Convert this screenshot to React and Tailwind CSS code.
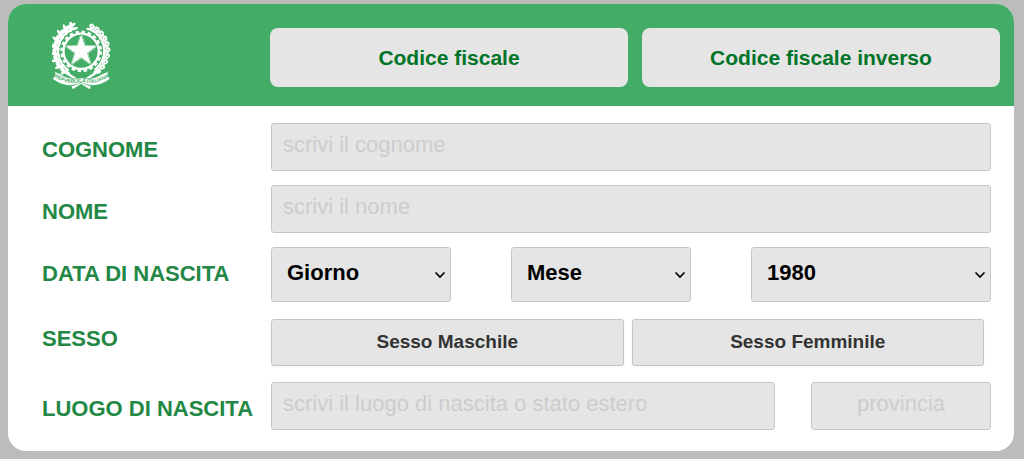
import { useState } from "react";

const MONTHS = [
  "Gennaio",
  "Febbraio",
  "Marzo",
  "Aprile",
  "Maggio",
  "Giugno",
  "Luglio",
  "Agosto",
  "Settembre",
  "Ottobre",
  "Novembre",
  "Dicembre",
];
const DAYS = Array.from({ length: 31 }, (_, i) => String(i + 1));
const YEARS = Array.from({ length: 100 }, (_, i) => String(2020 - i));

const labelClass = "w-[229px] shrink-0 whitespace-nowrap text-[22px] leading-[54px] font-bold text-[#238845]";
const inputClass =
  "h-12 rounded-[3px] border border-[#c6c6c6] bg-[#e5e5e5] px-[11px] pb-1 text-[22px] text-gray-800 outline-none placeholder:text-[#cdcdcd] focus:border-[#43ac66]";

// points of a five-pointed star, starting from the top
function star(cx, cy, outer, inner) {
  return Array.from({ length: 10 }, (_, i) => {
    const r = i % 2 ? inner : outer;
    const a = (i * Math.PI) / 5;
    return `${(cx + r * Math.sin(a)).toFixed(1)},${(cy - r * Math.cos(a)).toFixed(1)}`;
  }).join(" ");
}

function polar(angle, radius) {
  const a = (angle * Math.PI) / 180;
  return [121 + radius * Math.sin(a), 114 - radius * Math.cos(a)];
}

const OLIVE = [-142, -127, -112, -97, -82, -67, -52, -37, -23];
const OAK = [141, 128, 115, 102, 89, 76, 63, 50, 37, 24];

function Emblem() {
  return (
    <svg viewBox="34 28 176 201" className="h-[67px] w-[59px]" role="img" aria-label="Repubblica Italiana">
      {/* Olive branch */}
      <g fill="#fff">
        {OLIVE.map((angle) => {
          const [x1, y1] = polar(angle, 79);
          const [x2, y2] = polar(angle + 6, 69);
          return (
            <g key={angle}>
              <ellipse cx={x1} cy={y1} rx="5" ry="17" transform={`rotate(${angle + 18} ${x1} ${y1})`} />
              <ellipse cx={x2} cy={y2} rx="4" ry="11" transform={`rotate(${angle + 100} ${x2} ${y2})`} />
              <ellipse cx={x1} cy={y1} rx="5" ry="17" transform={`rotate(${angle + 76} ${x1} ${y1})`} />
            </g>
          );
        })}
      </g>
      {/* Oak branch */}
      <g fill="#fff">
        {OAK.map((angle) => {
          const [x1, y1] = polar(angle, 80);
          const [x2, y2] = polar(angle - 3, 69);
          const [x3, y3] = polar(angle + 6, 77);
          return (
            <g key={angle}>
              <ellipse cx={x1} cy={y1} rx="7" ry="9" transform={`rotate(${angle - 60} ${x1} ${y1})`} />
              <ellipse cx={x2} cy={y2} rx="4" ry="10" transform={`rotate(${angle - 104} ${x2} ${y2})`} />
              <circle cx={x3} cy={y3} r="5" />
              <circle cx={x1} cy={y1} r="2" fill="#43ac66" />
              <circle cx={x3} cy={y3} r="1.4" fill="#43ac66" />
            </g>
          );
        })}
      </g>
      {/* Gear */}
      <circle cx="121" cy="116" r="65" fill="#43ac66" />
      <circle cx="121" cy="116" r="53" fill="none" stroke="#fff" strokeWidth="7" />
      <circle
        cx="121"
        cy="116"
        r="59"
        fill="none"
        stroke="#fff"
        strokeWidth="7"
        pathLength="200"
        strokeDasharray="5.6 4.4"
      />
      {/* Star */}
      <polygon points={star(121, 115, 56, 22)} fill="#fff" />
      <polygon points={star(121, 115, 51, 19)} fill="none" stroke="#43ac66" strokeWidth="2" />
      <polygon points={star(121, 115, 46, 18)} fill="#fff" />
      {/* Crossed stems and ribbon */}
      <path d="M64 172 Q96 194 148 226 M178 172 Q146 194 94 226" fill="none" stroke="#fff" strokeWidth="8" />
      <path
        d="M41 176 L58 184 Q88 204 121 195 Q154 204 184 184 L203 176 L200 186 L208 199 Q176 222 148 218 Q130 215 121 209 Q112 215 94 218 Q66 222 35 199 L43 186 Z"
        fill="#fff"
        stroke="#43ac66"
        strokeWidth="2"
      />
      <defs>
        <path id="ribbon" d="M38 191 Q80 219 121 207 Q162 219 206 191" />
      </defs>
      <text fill="#43ac66" fontSize="15" fontWeight="bold" textAnchor="middle">
        <textPath href="#ribbon" startOffset="50%">
          REPVBBLICA ITALIANA
        </textPath>
      </text>
    </svg>
  );
}

function Select({ id, label, value, onChange, options, className }) {
  return (
    <div className={`relative ${className}`}>
      <select
        id={id}
        aria-label={label}
        value={value}
        onChange={(e) => onChange(e.target.value)}
        className="h-[55px] w-full appearance-none rounded-[3px] border border-[#c6c6c6] bg-[#e5e5e5] pr-8 pb-1 pl-[15px] text-[22px] font-bold text-black"
      >
        {options.map((option) => (
          <option key={option}>{option}</option>
        ))}
      </select>
      <svg
        viewBox="0 0 12 8"
        className="pointer-events-none absolute top-6 right-[5px] h-2 w-3"
        fill="none"
        stroke="#000"
        strokeWidth="1.7"
      >
        <path d="M1.5 1.5 L6 6 L10.5 1.5" />
      </svg>
    </div>
  );
}

function TabButton({ children }) {
  return (
    <button type="button" className="h-[59px] rounded-lg bg-[#e5e5e5] text-[21px] font-bold text-[#007427]">
      {children}
    </button>
  );
}

function SexButton({ children, active, onClick }) {
  return (
    <button
      type="button"
      aria-pressed={active}
      onClick={onClick}
      className="h-[47px] rounded-[3px] border border-[#c6c6c6] bg-[#e5e5e5] text-[19px] font-bold text-[#333] shadow-xs aria-pressed:border-[#238845]"
    >
      {children}
    </button>
  );
}

export default function App() {
  const [day, setDay] = useState("Giorno");
  const [month, setMonth] = useState("Mese");
  const [year, setYear] = useState("1980");
  const [sex, setSex] = useState("");

  return (
    <div className="min-h-screen bg-[#bcbcbc] pt-1 pr-[10px] pb-2 pl-2 font-['Liberation_Sans',Arial,sans-serif]">
      <main className="overflow-hidden rounded-[18px] bg-white">
        <header className="flex items-start bg-[#43ac66] pt-[18px] pr-[14px] pb-[17px] pl-11">
          <div className="w-[218px] shrink-0">
            <Emblem />
          </div>
          <nav className="grid flex-1 grid-cols-2 gap-[14px] pt-1.5">
            <TabButton>Codice fiscale</TabButton>
            <TabButton>Codice fiscale inverso</TabButton>
          </nav>
        </header>

        <form className="flex flex-col gap-2 pt-[17px] pr-[23px] pb-[15px] pl-[34px]">
          <div className="flex items-start">
            <label htmlFor="cognome" className={labelClass}>
              COGNOME
            </label>
            <input id="cognome" type="text" placeholder="scrivi il cognome" className={`${inputClass} min-w-0 flex-1`} />
          </div>

          <div className="flex items-start">
            <label htmlFor="nome" className={labelClass}>
              NOME
            </label>
            <input id="nome" type="text" placeholder="scrivi il nome" className={`${inputClass} min-w-0 flex-1`} />
          </div>

          <div className="flex items-start pb-[9px]">
            <label htmlFor="giorno" className={labelClass}>
              DATA DI NASCITA
            </label>
            <div className="grid flex-1 grid-cols-3">
              <Select id="giorno" label="Giorno" value={day} onChange={setDay} options={["Giorno", ...DAYS]} className="w-3/4" />
              <Select id="mese" label="Mese" value={month} onChange={setMonth} options={["Mese", ...MONTHS]} className="w-3/4" />
              <Select id="anno" label="Anno" value={year} onChange={setYear} options={YEARS} className="w-full" />
            </div>
          </div>

          <div role="group" aria-labelledby="sesso" className="flex items-start pb-2">
            <span id="sesso" className="w-[229px] shrink-0 text-[22px] leading-10 font-bold text-[#238845]">
              SESSO
            </span>
            <div className="grid flex-1 grid-cols-2 gap-2 pr-[7px]">
              <SexButton active={sex === "M"} onClick={() => setSex("M")}>
                Sesso Maschile
              </SexButton>
              <SexButton active={sex === "F"} onClick={() => setSex("F")}>
                Sesso Femminile
              </SexButton>
            </div>
          </div>

          <div className="flex items-start">
            <label htmlFor="luogo" className={labelClass}>
              LUOGO DI NASCITA
            </label>
            <div className="flex flex-1 justify-between">
              <input
                id="luogo"
                type="text"
                placeholder="scrivi il luogo di nascita o stato estero"
                className={`${inputClass} w-[70%]`}
              />
              <input
                type="text"
                aria-label="Provincia"
                placeholder="provincia"
                className={`${inputClass} w-1/4 text-center`}
              />
            </div>
          </div>
        </form>
      </main>
    </div>
  );
}
